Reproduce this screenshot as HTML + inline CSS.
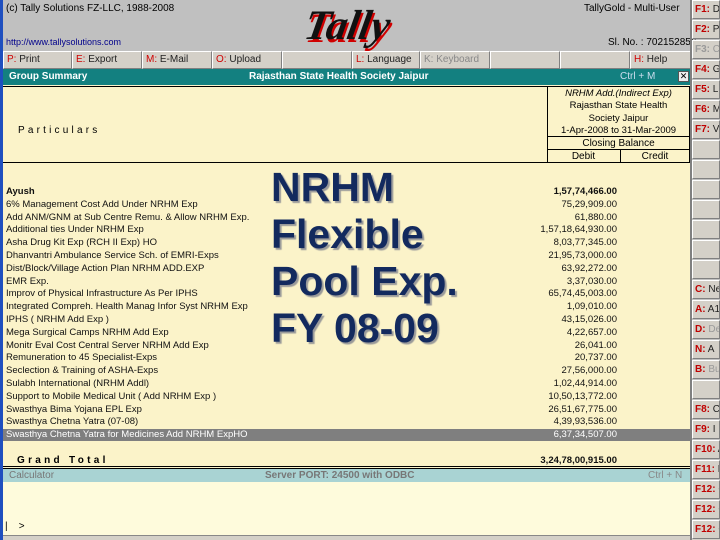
<!DOCTYPE html>
<html><head><meta charset="utf-8"><style>
*{margin:0;padding:0;box-sizing:border-box}
body{width:720px;height:540px;overflow:hidden;background:#c0c0c0;font-family:"Liberation Sans",sans-serif;position:relative}
.a{position:absolute}
.t{font-size:10px;color:#000;white-space:nowrap}
.btn{position:absolute;height:18px;top:51px;background:#d4d0c8;border:1px solid #fff;border-right-color:#808080;border-bottom-color:#808080;font-size:10px;padding:2px 3px;color:#222;white-space:nowrap}
.btn b{color:#d00000;font-weight:normal}
.rb{position:absolute;left:692px;width:28px;height:19px;background:#d4d0c8;border:1px solid #fff;border-right-color:#808080;border-bottom-color:#808080;font-size:10px;padding:3px 2px;overflow:hidden;white-space:nowrap;color:#222}
.rb b{color:#c00000}
.row{position:absolute;left:6px;font-size:9.5px;color:#111;white-space:nowrap;height:12px;line-height:12px}
.num{position:absolute;left:500px;width:117px;text-align:right;font-size:9.5px;color:#111;height:12px;line-height:12px}
.big{position:absolute;left:271px;font-family:"Liberation Sans",sans-serif;font-weight:bold;font-size:41px;color:#132a5e;text-shadow:2px 2px 1px #9a9a9a;line-height:47px;white-space:nowrap}
</style></head><body>
<div class="a" style="left:0;top:0;width:3px;height:540px;background:#1f4fbf"></div>
<div class="a t" style="left:6px;top:3px;font-size:10px">(c) Tally Solutions FZ-LLC, 1988-2008</div>
<div class="a t" style="left:6px;top:37px;color:#00008b;font-size:9px">http://www.tallysolutions.com</div>
<div class="a" style="left:305px;top:2px;font-family:'Liberation Serif',serif;font-style:italic;font-weight:bold;font-size:42px;color:#111;text-shadow:2px 3px 0 #d00000;transform:skewX(-10deg)">Tally</div>
<div class="a t" style="left:584px;top:3px">TallyGold - Multi-User</div>
<div class="a t" style="left:608px;top:37px">Sl. No. : 702152856</div>
<div class="btn" style="left:3px;width:69px"><b>P:</b> Print</div>
<div class="btn" style="left:72px;width:70px"><b>E:</b> Export</div>
<div class="btn" style="left:142px;width:70px"><b>M:</b> E-Mail</div>
<div class="btn" style="left:212px;width:70px"><b>O:</b> Upload</div>
<div class="btn" style="left:282px;width:70px"></div>
<div class="btn" style="left:352px;width:68px"><b>L:</b> Language</div>
<div class="btn" style="left:420px;width:70px;color:#888"><b style="color:#888">K:</b> Keyboard</div>
<div class="btn" style="left:490px;width:70px"></div>
<div class="btn" style="left:560px;width:70px"></div>
<div class="btn" style="left:630px;width:62px"><b>H:</b> Help</div>
<div class="a" style="left:3px;top:69px;width:689px;height:16px;background:#138080"></div>
<div class="a t" style="left:9px;top:71px;color:#fff;font-weight:bold">Group Summary</div>
<div class="a t" style="left:249px;top:71px;color:#fff;font-weight:bold">Rajasthan State Health Society Jaipur</div>
<div class="a t" style="left:620px;top:71px;color:#cde">Ctrl + M</div>
<div class="a" style="left:678px;top:71px;width:11px;height:11px;background:#eee;border:1px solid #555;font-size:9px;line-height:9px;text-align:center">✕</div>
<div class="a" style="left:3px;top:85px;width:689px;height:384px;background:#fbf3c9"></div>
<div class="a" style="left:3px;top:86px;width:687px;height:1px;background:#000"></div>
<div class="a" style="left:3px;top:162px;width:687px;height:1px;background:#000"></div>
<div class="a" style="left:547px;top:86px;width:1px;height:77px;background:#000"></div>
<div class="a" style="left:689px;top:86px;width:1px;height:77px;background:#000"></div>
<div class="a" style="left:547px;top:136px;width:143px;height:1px;background:#000"></div>
<div class="a" style="left:547px;top:149px;width:143px;height:1px;background:#000"></div>
<div class="a" style="left:620px;top:149px;width:1px;height:14px;background:#000"></div>
<div class="a t" style="left:547px;width:143px;top:88px;text-align:center;font-size:9.5px;line-height:12.3px">
<i>NRHM Add.(Indirect Exp)</i><br>Rajasthan State Health<br>Society Jaipur<br>1-Apr-2008 to 31-Mar-2009</div>
<div class="a t" style="left:547px;width:143px;top:138px;text-align:center">Closing Balance</div>
<div class="a t" style="left:547px;width:73px;top:151px;text-align:center">Debit</div>
<div class="a t" style="left:620px;width:70px;top:151px;text-align:center">Credit</div>
<div class="a t" style="left:18px;top:125px;letter-spacing:3.2px">Particulars</div>
<div class="a" style="left:3px;top:429px;width:689px;height:12px;background:#7f7f7f"></div>
<div class="row" style="top:186px;font-weight:bold">Ayush</div>
<div class="row" style="top:199px">6% Management Cost Add Under NRHM Exp</div>
<div class="row" style="top:212px">Add ANM/GNM at Sub Centre Remu. &amp; Allow NRHM Exp.</div>
<div class="row" style="top:224px">Additional ties Under NRHM Exp</div>
<div class="row" style="top:237px">Asha Drug Kit Exp (RCH II Exp) HO</div>
<div class="row" style="top:250px">Dhanvantri Ambulance Service Sch. of EMRI-Exps</div>
<div class="row" style="top:263px">Dist/Block/Village Action Plan NRHM ADD.EXP</div>
<div class="row" style="top:276px">EMR Exp.</div>
<div class="row" style="top:288px">Improv of Physical Infrastructure As Per IPHS</div>
<div class="row" style="top:301px">Integrated Compreh. Health Manag Infor Syst NRHM Exp</div>
<div class="row" style="top:314px">IPHS ( NRHM Add Exp )</div>
<div class="row" style="top:327px">Mega Surgical Camps NRHM Add Exp</div>
<div class="row" style="top:340px">Monitr Eval Cost Central Server NRHM Add Exp</div>
<div class="row" style="top:352px">Remuneration to 45 Specialist-Exps</div>
<div class="row" style="top:365px">Seclection &amp; Training of ASHA-Exps</div>
<div class="row" style="top:378px">Sulabh International (NRHM Addl)</div>
<div class="row" style="top:391px">Support to Mobile Medical Unit ( Add NRHM Exp )</div>
<div class="row" style="top:404px">Swasthya Bima Yojana EPL Exp</div>
<div class="row" style="top:416px">Swasthya Chetna Yatra (07-08)</div>
<div class="row" style="top:429px;color:#fff">Swasthya Chetna Yatra for Medicines Add NRHM ExpHO</div>
<div class="num" style="top:186px;font-weight:bold">1,57,74,466.00</div>
<div class="num" style="top:199px">75,29,909.00</div>
<div class="num" style="top:212px">61,880.00</div>
<div class="num" style="top:224px">1,57,18,64,930.00</div>
<div class="num" style="top:237px">8,03,77,345.00</div>
<div class="num" style="top:250px">21,95,73,000.00</div>
<div class="num" style="top:263px">63,92,272.00</div>
<div class="num" style="top:276px">3,37,030.00</div>
<div class="num" style="top:288px">65,74,45,003.00</div>
<div class="num" style="top:301px">1,09,010.00</div>
<div class="num" style="top:314px">43,15,026.00</div>
<div class="num" style="top:327px">4,22,657.00</div>
<div class="num" style="top:340px">26,041.00</div>
<div class="num" style="top:352px">20,737.00</div>
<div class="num" style="top:365px">27,56,000.00</div>
<div class="num" style="top:378px">1,02,44,914.00</div>
<div class="num" style="top:391px">10,50,13,772.00</div>
<div class="num" style="top:404px">26,51,67,775.00</div>
<div class="num" style="top:416px">4,39,93,536.00</div>
<div class="num" style="top:429px;color:#fff">6,37,34,507.00</div>
<div class="a t" style="left:17px;top:455px;font-weight:bold;letter-spacing:3.3px">Grand Total</div>
<div class="num" style="top:455px;font-weight:bold">3,24,78,00,915.00</div>
<div class="a" style="left:3px;top:466px;width:689px;height:1px;background:#000"></div>
<div class="a" style="left:3px;top:468px;width:689px;height:1px;background:#000"></div>
<div class="big" style="top:164px">NRHM</div>
<div class="big" style="top:211px">Flexible</div>
<div class="big" style="top:258px">Pool Exp.</div>
<div class="big" style="top:305px">FY 08-09</div>
<div class="a" style="left:3px;top:469px;width:689px;height:13px;background:#a9d3d3"></div>
<div class="a t" style="left:9px;top:470px;color:#777">Calculator</div>
<div class="a t" style="left:265px;top:470px;color:#777;font-weight:bold">Server PORT: 24500 with ODBC</div>
<div class="a t" style="left:648px;top:470px;color:#888">Ctrl + N</div>
<div class="a" style="left:3px;top:482px;width:689px;height:53px;background:#fefbdc"></div>
<div class="a t" style="left:5px;top:521px">|&nbsp;&nbsp;&nbsp;&nbsp;&gt;</div>
<div class="a" style="left:3px;top:535px;width:717px;height:5px;background:#d4d0c8;border-top:1px solid #888"></div>
<div class="a" style="left:690px;top:0;width:2px;height:540px;background:#808080"></div>
<div class="rb" style="top:0px"><b>F1:</b> D</div>
<div class="rb" style="top:20px"><b>F2:</b> P</div>
<div class="rb" style="top:40px;color:#999"><b style="color:#999">F3:</b> C</div>
<div class="rb" style="top:60px"><b>F4:</b> G</div>
<div class="rb" style="top:80px"><b>F5:</b> L</div>
<div class="rb" style="top:100px"><b>F6:</b> M</div>
<div class="rb" style="top:120px"><b>F7:</b> V</div>
<div class="rb" style="top:140px"></div>
<div class="rb" style="top:160px"></div>
<div class="rb" style="top:180px"></div>
<div class="rb" style="top:200px"></div>
<div class="rb" style="top:220px"></div>
<div class="rb" style="top:240px"></div>
<div class="rb" style="top:260px"></div>
<div class="rb" style="top:280px"><b>C:</b> Ne</div>
<div class="rb" style="top:300px"><b>A:</b> A1</div>
<div class="rb" style="top:320px;color:#999"><b>D:</b> De</div>
<div class="rb" style="top:340px"><b>N:</b> A</div>
<div class="rb" style="top:360px;color:#999"><b>B:</b> Bud</div>
<div class="rb" style="top:380px"></div>
<div class="rb" style="top:400px"><b>F8:</b> C</div>
<div class="rb" style="top:420px"><b>F9:</b> I</div>
<div class="rb" style="top:440px"><b>F10:</b> A</div>
<div class="rb" style="top:460px"><b>F11:</b> F</div>
<div class="rb" style="top:480px"><b>F12:</b> C</div>
<div class="rb" style="top:500px"><b>F12:</b> C</div>
<div class="rb" style="top:520px"><b>F12:</b> C</div>
</body></html>
